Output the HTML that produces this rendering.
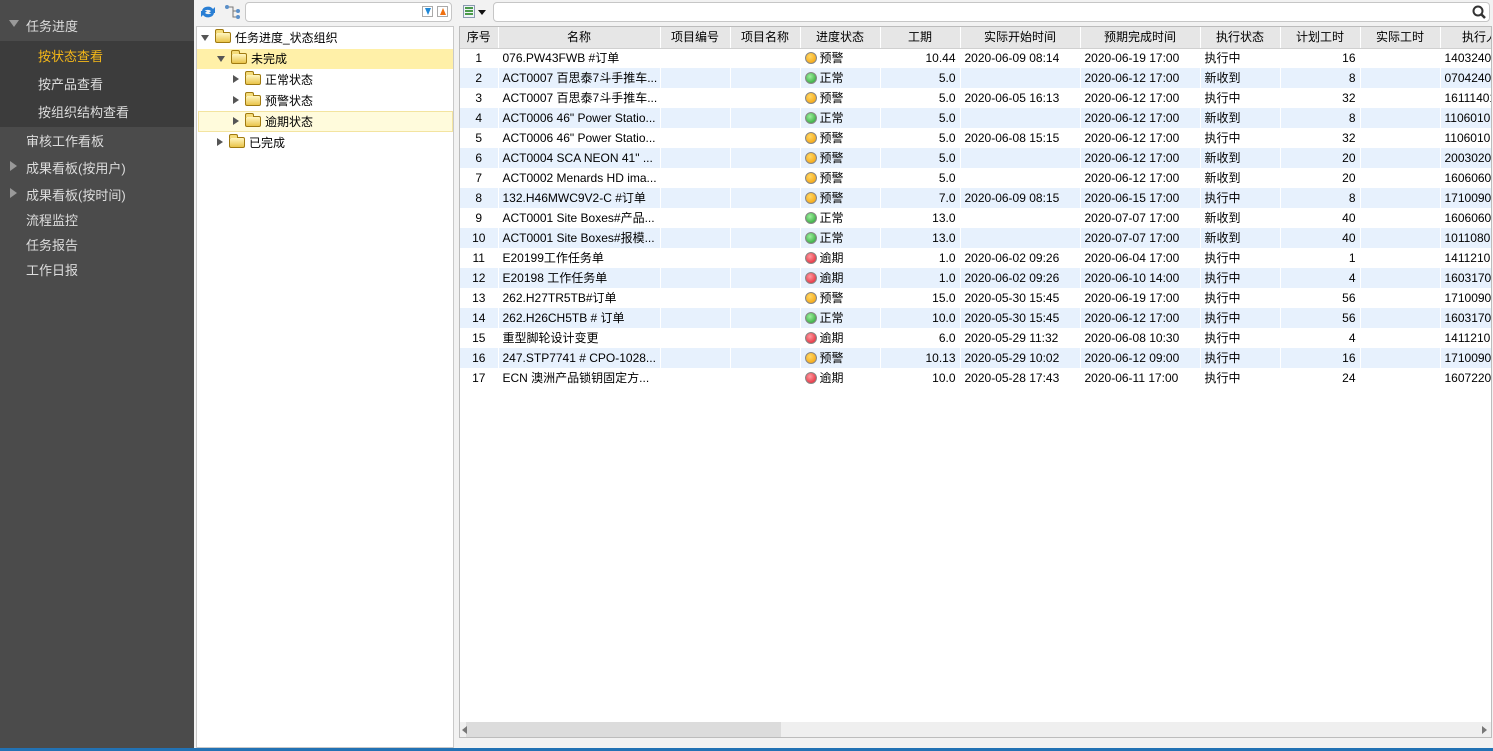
<!DOCTYPE html>
<html><head><meta charset="utf-8"><style>
*{margin:0;padding:0;box-sizing:border-box}
body{width:1493px;height:751px;overflow:hidden;background:#f2f2f2;font-family:"Liberation Sans","Noto Sans CJK SC",sans-serif;font-size:12px;color:#000;position:relative}
.abs{position:absolute}
#side{left:0;top:0;width:194px;height:751px;background:#4b4b4b;color:#ddd;font-size:13px}
#side .it{position:absolute;left:26px;white-space:nowrap}
#side .sub{position:absolute;left:38px}
.tri{position:absolute;width:0;height:0}
#tree{left:196px;top:26px;width:258px;height:722px;background:#fff;border:1px solid #c9c9c9}
.tn{position:absolute;height:20px;line-height:20px;white-space:nowrap;font-size:12px}
.fold{display:inline-block;width:16px;height:11px;border:1px solid #a07a10;border-radius:2px;background:linear-gradient(#fff6c0,#e9c44a);vertical-align:-1px;margin-right:4px;position:relative}
.fold:before{content:"";position:absolute;left:-1px;top:-4px;width:7px;height:3px;border:1px solid #a07a10;border-bottom:none;background:#f5dc7a;border-radius:2px 2px 0 0}
.ar{display:inline-block;width:0;height:0;margin-right:6px;vertical-align:1px}
.ar.r{border-left:6px solid #555;border-top:4px solid transparent;border-bottom:4px solid transparent}
.ar.d{border-top:6px solid #555;border-left:4px solid transparent;border-right:4px solid transparent;vertical-align:1px}
#grid{left:459px;top:26px;width:1033px;height:712px;background:#fff;border:1px solid #bcbcbc;overflow:hidden}
table{border-collapse:collapse;table-layout:fixed;position:absolute;left:0;top:0;width:1060px}
td,th{height:20px;line-height:18px;padding:0 4px;white-space:nowrap;overflow:hidden;font-weight:normal;font-size:12px}
th{background:#e6e6e6;border-right:1px solid #fff;border-bottom:1px solid #d0d0d0;text-align:center;height:21px}
td{border-right:1px solid #fff}
tr.e td{background:#e7f1fd}
.c{text-align:center}.r{text-align:right}
.dot{display:inline-block;width:12px;height:12px;border-radius:50%;border:1px solid #888;vertical-align:-2px;margin-right:3px}
.o{background:radial-gradient(circle at 40% 35%,#ffd866,#f29a00)}
.g{background:radial-gradient(circle at 40% 35%,#9ef09e,#1f9a2a)}
.rd{background:radial-gradient(circle at 40% 35%,#ff9aa0,#e01828)}
</style></head><body>
<div id="side" class="abs">
 <div class="abs" style="left:0;top:41px;width:194px;height:86px;background:#3c3c3c"></div>
 <div class="tri" style="left:9px;top:20px;border-top:7px solid #999;border-left:5px solid transparent;border-right:5px solid transparent"></div>
 <div class="it" style="top:16px">任务进度</div>
 <div class="sub" style="top:46px;color:#f5b818">按状态查看</div>
 <div class="sub" style="top:74px">按产品查看</div>
 <div class="sub" style="top:102px">按组织结构查看</div>
 <div class="it" style="top:131px">审核工作看板</div>
 <div class="tri" style="left:10px;top:161px;border-left:7px solid #999;border-top:5px solid transparent;border-bottom:5px solid transparent"></div>
 <div class="it" style="top:158px">成果看板(按用户)</div>
 <div class="tri" style="left:10px;top:188px;border-left:7px solid #999;border-top:5px solid transparent;border-bottom:5px solid transparent"></div>
 <div class="it" style="top:185px">成果看板(按时间)</div>
 <div class="it" style="top:210px">流程监控</div>
 <div class="it" style="top:235px">任务报告</div>
 <div class="it" style="top:260px">工作日报</div>
</div>
<svg class="abs" style="left:199px;top:4px" width="18" height="16" viewBox="0 0 18 16"><path d="M3 7a6 5 0 0 1 11-2l2-2v6h-6l2-2a4 3 0 0 0-7 1z" fill="#2a7fd4"/><path d="M15 9a6 5 0 0 1-11 2l-2 2V7h6l-2 2a4 3 0 0 0 7-1z" fill="#2a7fd4"/></svg>
<svg class="abs" style="left:224px;top:4px" width="18" height="16"><circle cx="3" cy="3" r="2" fill="#5a8fc8"/><circle cx="14" cy="7" r="2" fill="#5a8fc8"/><circle cx="14" cy="13" r="2" fill="#5a8fc8"/><path d="M5 3h4v10h3M9 7h3" stroke="#777" fill="none"/></svg>
<div class="abs" style="left:245px;top:2px;width:207px;height:20px;background:#fff;border:1px solid #c6c6c6;border-radius:4px"></div>
<div class="abs" style="left:422px;top:6px;width:11px;height:11px;border:1px solid #aaa;background:#fff"><div style="margin:1px 2px;width:0;height:0;border-top:7px solid #1e88d8;border-left:3px solid transparent;border-right:3px solid transparent"></div></div>
<div class="abs" style="left:437px;top:6px;width:11px;height:11px;border:1px solid #aaa;background:#fff"><div style="margin:1px 2px;width:0;height:0;border-bottom:7px solid #f07010;border-left:3px solid transparent;border-right:3px solid transparent"></div></div>
<div id="tree" class="abs">
 <div class="tn" style="left:4px;top:1px"><span class="ar d"></span><span class="fold"></span>任务进度_状态组织</div>
 <div class="abs" style="left:0;top:22px;width:256px;height:20px;background:#fff0a8"></div>
 <div class="tn" style="left:20px;top:22px"><span class="ar d"></span><span class="fold"></span>未完成</div>
 <div class="tn" style="left:36px;top:43px"><span class="ar r"></span><span class="fold"></span>正常状态</div>
 <div class="tn" style="left:36px;top:64px"><span class="ar r"></span><span class="fold"></span>预警状态</div>
 <div class="abs" style="left:1px;top:84px;width:255px;height:21px;background:#fffbdc;border:1px solid #f3e4a0"></div>
 <div class="tn" style="left:36px;top:85px"><span class="ar r"></span><span class="fold"></span>逾期状态</div>
 <div class="tn" style="left:20px;top:106px"><span class="ar r"></span><span class="fold"></span>已完成</div>
</div>
<div class="abs" style="left:463px;top:5px;width:12px;height:13px;border:1px solid #8a9ab0;background:#eef3f8"></div>
<div class="abs" style="left:465px;top:7px;width:8px;height:9px;background:repeating-linear-gradient(#4a9a4a 0 2px,transparent 2px 3px)"></div>
<div class="abs" style="left:478px;top:10px;border-top:5px solid #111;border-left:4px solid transparent;border-right:4px solid transparent"></div>
<div class="abs" style="left:493px;top:2px;width:997px;height:20px;background:#fff;border:1px solid #c6c6c6;border-radius:4px"></div>
<svg class="abs" style="left:1471px;top:4px" width="16" height="16"><circle cx="7" cy="7" r="4.5" stroke="#333" stroke-width="2" fill="none"/><path d="M10 10l4 4" stroke="#333" stroke-width="2.5"/></svg>
<div id="grid" class="abs">
<table>
<colgroup><col style="width:38px"><col style="width:162px"><col style="width:70px"><col style="width:70px"><col style="width:80px"><col style="width:80px"><col style="width:120px"><col style="width:120px"><col style="width:80px"><col style="width:80px"><col style="width:80px"><col style="width:80px"></colgroup>
<tr><th>序号</th><th>名称</th><th>项目编号</th><th>项目名称</th><th>进度状态</th><th>工期</th><th>实际开始时间</th><th>预期完成时间</th><th>执行状态</th><th>计划工时</th><th>实际工时</th><th>执行人</th></tr>
<tr><td class="c">1</td><td>076.PW43FWB #订单</td><td></td><td></td><td><span class="dot o"></span>预警</td><td class="r">10.44</td><td>2020-06-09 08:14</td><td>2020-06-19 17:00</td><td>执行中</td><td class="r">16</td><td></td><td>14032401</td></tr>
<tr class="e"><td class="c">2</td><td>ACT0007 百思泰7斗手推车...</td><td></td><td></td><td><span class="dot g"></span>正常</td><td class="r">5.0</td><td></td><td>2020-06-12 17:00</td><td>新收到</td><td class="r">8</td><td></td><td>07042403</td></tr>
<tr><td class="c">3</td><td>ACT0007 百思泰7斗手推车...</td><td></td><td></td><td><span class="dot o"></span>预警</td><td class="r">5.0</td><td>2020-06-05 16:13</td><td>2020-06-12 17:00</td><td>执行中</td><td class="r">32</td><td></td><td>16111401</td></tr>
<tr class="e"><td class="c">4</td><td>ACT0006 46" Power Statio...</td><td></td><td></td><td><span class="dot g"></span>正常</td><td class="r">5.0</td><td></td><td>2020-06-12 17:00</td><td>新收到</td><td class="r">8</td><td></td><td>11060101</td></tr>
<tr><td class="c">5</td><td>ACT0006 46" Power Statio...</td><td></td><td></td><td><span class="dot o"></span>预警</td><td class="r">5.0</td><td>2020-06-08 15:15</td><td>2020-06-12 17:00</td><td>执行中</td><td class="r">32</td><td></td><td>11060101</td></tr>
<tr class="e"><td class="c">6</td><td>ACT0004 SCA NEON 41" ...</td><td></td><td></td><td><span class="dot o"></span>预警</td><td class="r">5.0</td><td></td><td>2020-06-12 17:00</td><td>新收到</td><td class="r">20</td><td></td><td>20030201</td></tr>
<tr><td class="c">7</td><td>ACT0002 Menards HD ima...</td><td></td><td></td><td><span class="dot o"></span>预警</td><td class="r">5.0</td><td></td><td>2020-06-12 17:00</td><td>新收到</td><td class="r">20</td><td></td><td>16060601</td></tr>
<tr class="e"><td class="c">8</td><td>132.H46MWC9V2-C #订单</td><td></td><td></td><td><span class="dot o"></span>预警</td><td class="r">7.0</td><td>2020-06-09 08:15</td><td>2020-06-15 17:00</td><td>执行中</td><td class="r">8</td><td></td><td>17100901</td></tr>
<tr><td class="c">9</td><td>ACT0001 Site Boxes#产品...</td><td></td><td></td><td><span class="dot g"></span>正常</td><td class="r">13.0</td><td></td><td>2020-07-07 17:00</td><td>新收到</td><td class="r">40</td><td></td><td>16060601</td></tr>
<tr class="e"><td class="c">10</td><td>ACT0001 Site Boxes#报模...</td><td></td><td></td><td><span class="dot g"></span>正常</td><td class="r">13.0</td><td></td><td>2020-07-07 17:00</td><td>新收到</td><td class="r">40</td><td></td><td>10110801</td></tr>
<tr><td class="c">11</td><td>E20199工作任务单</td><td></td><td></td><td><span class="dot rd"></span>逾期</td><td class="r">1.0</td><td>2020-06-02 09:26</td><td>2020-06-04 17:00</td><td>执行中</td><td class="r">1</td><td></td><td>14112101</td></tr>
<tr class="e"><td class="c">12</td><td>E20198 工作任务单</td><td></td><td></td><td><span class="dot rd"></span>逾期</td><td class="r">1.0</td><td>2020-06-02 09:26</td><td>2020-06-10 14:00</td><td>执行中</td><td class="r">4</td><td></td><td>16031701</td></tr>
<tr><td class="c">13</td><td>262.H27TR5TB#订单</td><td></td><td></td><td><span class="dot o"></span>预警</td><td class="r">15.0</td><td>2020-05-30 15:45</td><td>2020-06-19 17:00</td><td>执行中</td><td class="r">56</td><td></td><td>17100901</td></tr>
<tr class="e"><td class="c">14</td><td>262.H26CH5TB # 订单</td><td></td><td></td><td><span class="dot g"></span>正常</td><td class="r">10.0</td><td>2020-05-30 15:45</td><td>2020-06-12 17:00</td><td>执行中</td><td class="r">56</td><td></td><td>16031701</td></tr>
<tr><td class="c">15</td><td>重型脚轮设计变更</td><td></td><td></td><td><span class="dot rd"></span>逾期</td><td class="r">6.0</td><td>2020-05-29 11:32</td><td>2020-06-08 10:30</td><td>执行中</td><td class="r">4</td><td></td><td>14112101</td></tr>
<tr class="e"><td class="c">16</td><td>247.STP7741 # CPO-1028...</td><td></td><td></td><td><span class="dot o"></span>预警</td><td class="r">10.13</td><td>2020-05-29 10:02</td><td>2020-06-12 09:00</td><td>执行中</td><td class="r">16</td><td></td><td>17100901</td></tr>
<tr><td class="c">17</td><td>ECN 澳洲产品锁钥固定方...</td><td></td><td></td><td><span class="dot rd"></span>逾期</td><td class="r">10.0</td><td>2020-05-28 17:43</td><td>2020-06-11 17:00</td><td>执行中</td><td class="r">24</td><td></td><td>16072201</td></tr>
</table>
<div class="abs" style="left:0;top:695px;width:1033px;height:16px;background:#efefef"></div>
<div class="abs" style="left:6px;top:695px;width:315px;height:16px;background:#dcdcdc"></div>
<div class="abs" style="left:2px;top:699px;border-right:5px solid #777;border-top:4px solid transparent;border-bottom:4px solid transparent"></div>
<div class="abs" style="left:1022px;top:699px;border-left:5px solid #777;border-top:4px solid transparent;border-bottom:4px solid transparent"></div>
</div>
<div class="abs" style="left:0;top:748px;width:1493px;height:3px;background:#2272b4"></div>
</body></html>
